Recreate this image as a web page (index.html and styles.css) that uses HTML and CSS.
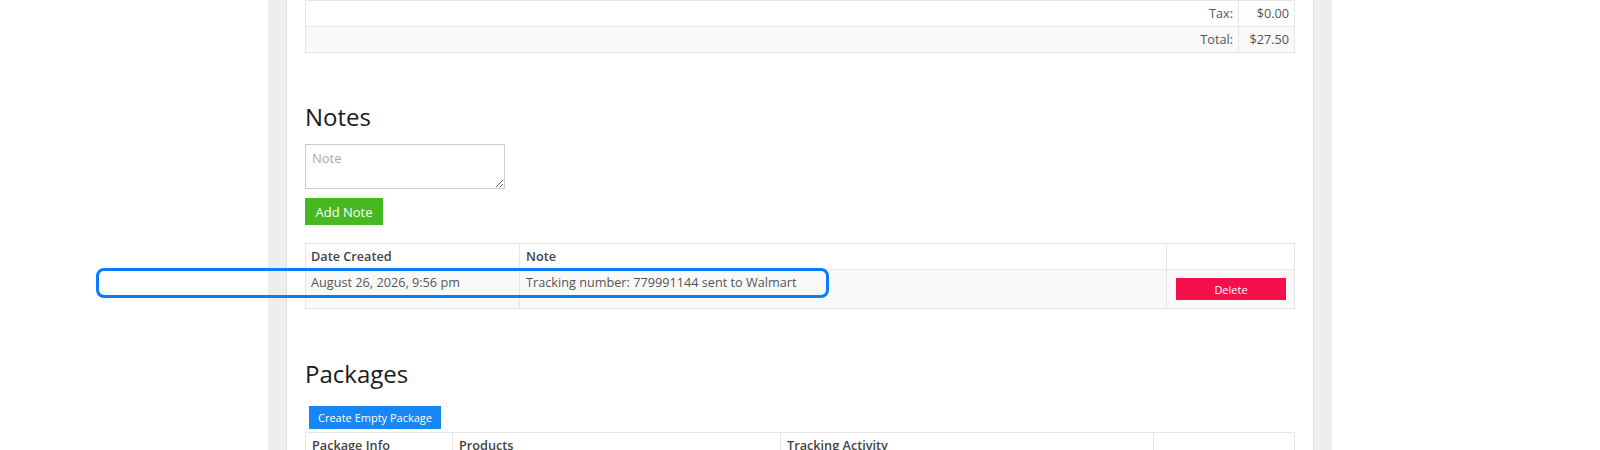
FILE: index.html
```html
<!DOCTYPE html>
<html>
<head>
<meta charset="utf-8">
<link rel="stylesheet" href="styles.css">
</head>
<body>
<div class="page">
  <div class="panel">
    <table class="grid totals">
      <colgroup><col><col class="c-val"></colgroup>
      <tr><td class="r">Tax:</td><td class="r">$0.00</td></tr>
      <tr class="alt"><td class="r">Total:</td><td class="r">$27.50</td></tr>
    </table>

    <h2 class="title notes-title">Notes</h2>
    <textarea class="note-input" placeholder="Note"></textarea>
    <button class="btn btn-green">Add Note</button>

    <table class="grid notes">
      <colgroup><col class="c-date"><col class="c-note"><col></colgroup>
      <tr><th>Date Created</th><th>Note</th><th></th></tr>
      <tr class="alt"><td>August 26, 2026, 9:56 pm</td><td>Tracking number: 779991144 sent to Walmart</td><td class="act"><button class="btn btn-red">Delete</button></td></tr>
    </table>

    <h2 class="title pk-title">Packages</h2>
    <button class="btn btn-blue">Create Empty Package</button>

    <table class="grid packages">
      <colgroup><col class="c-p1"><col class="c-p2"><col class="c-p3"><col></colgroup>
      <tr><th>Package Info</th><th>Products</th><th>Tracking Activity</th><th></th></tr>
      <tr><td>&nbsp;</td><td></td><td></td><td></td></tr>
    </table>
  </div>
</div>
<div class="highlight"></div>
</body>
</html>
```

FILE: styles.css
```css
html, body {
  margin: 0;
  padding: 0;
  background: #fff;
  font-family: "Open Sans", "Liberation Sans", sans-serif;
  color: #555;
  overflow: hidden;
}

.page {
  width: 1028px;
  margin: 0 auto;
  padding: 0 18px;
  background: #eeeeee;
  min-height: 100vh;
}

.panel {
  background: #fff;
  border-left: 1px solid #dedede;
  border-right: 1px solid #dedede;
  padding: 0 18px 40px;
  min-height: 100vh;
}

.grid {
  width: 100%;
  border-collapse: collapse;
  table-layout: fixed;
  font-size: 12.7px;
  line-height: 19px;
}

.grid td, .grid th {
  border: 1px solid #e6e6e6;
  padding: 3px 6px;
  text-align: left;
  vertical-align: top;
  color: #555;
  font-weight: 400;
}

.grid th {
  font-weight: 600;
  color: #444;
}

.grid tr.alt td {
  background: #f9f9f9;
}

.totals td.r {
  text-align: right;
  padding: 3px 5px;
}

.c-val { width: 56px; }
.c-date { width: 214px; }
.c-note { width: 647px; }
.c-p1 { width: 147px; }
.c-p2 { width: 328px; }
.c-p3 { width: 373px; }

.notes td:first-child, .notes th:first-child { padding-left: 5px; }

.title {
  font-size: 24px;
  font-weight: 400;
  line-height: 30px;
  color: #1a1a1a;
  margin: 0;
}

.notes-title { margin: 49px 0 12px; }
.pk-title { margin: 50px 0 17px; }

.note-input {
  display: block;
  box-sizing: border-box;
  width: 200px;
  height: 45px;
  margin: 0;
  padding: 4px 6px;
  border: 1px solid #cccccc;
  font-family: "Open Sans", "Liberation Sans", sans-serif;
  font-size: 13px;
  line-height: 18px;
  color: #555;
  outline: none;
}

.note-input::placeholder { color: #aaaaaa; }

.btn {
  display: block;
  border: none;
  margin: 0;
  color: #fff;
  font-family: "Open Sans", "Liberation Sans", sans-serif;
  cursor: pointer;
  box-sizing: border-box;
}

.btn-green {
  margin-top: 9px;
  height: 27px;
  width: 78px;
  padding: 0;
  font-size: 13px;
  background: #45b91f;
}

.notes { margin-top: 18px; }

.notes td.act {
  padding: 8px 8px 8px 9px;
}

.btn-red {
  width: 100%;
  height: 22px;
  padding: 0;
  font-size: 11px;
  background: #f5104b;
}

.btn-blue {
  margin-left: 4px;
  height: 23px;
  width: 132px;
  padding: 0;
  font-size: 11px;
  background: #1886f4;
}

.packages { margin-top: 3px; }

.highlight {
  position: absolute;
  left: 96px;
  top: 268px;
  width: 733px;
  height: 30px;
  box-sizing: border-box;
  border: 3px solid #0b7bf7;
  border-radius: 8px;
  pointer-events: none;
}
```
